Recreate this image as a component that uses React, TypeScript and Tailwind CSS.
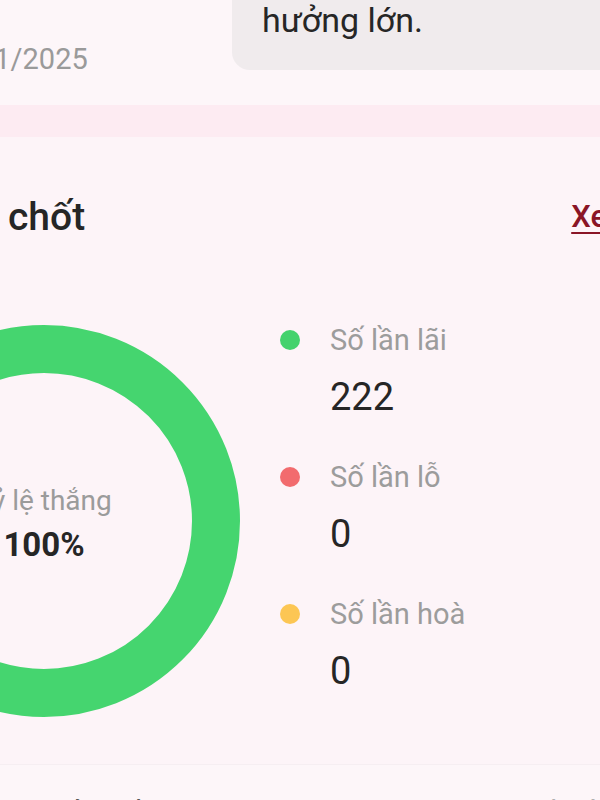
import React from "react";

const legend = [
  { color: "#44d26d", label: "Số lần lãi", value: "222" },
  { color: "#f26b6e", label: "Số lần lỗ", value: "0" },
  { color: "#fcc654", label: "Số lần hoà", value: "0" },
];

export default function App() {
  return (
    <div
      className="h-[800px] w-[600px] overflow-hidden bg-[#fdf6f9] text-[#222222]"
      style={{ fontFamily: "Roboto, 'Noto Sans', sans-serif" }}
    >
      {/* top message area */}
      <div className="flex h-[105px] items-start">
        <div className="-ml-[22px] w-[254px] shrink-0 pt-[39px] text-[29px] leading-[40px] text-[#9a9a9a]">
          01/2025
        </div>
        <div className="-mt-[40px] h-[110px] flex-1 rounded-bl-[18px] bg-[#f0ebed] pl-[30px] pt-[40px] text-[34px] leading-[40px] text-[#262626]">
          hưởng lớn.
        </div>
      </div>
      {/* pink band */}
      <div className="h-[32px] bg-[#fdebf2]" />
      {/* card */}
      <div className="h-[628px] border-b border-[#f6eef2] bg-[#fdf4f8]">
        <div className="flex items-center justify-between pl-[8px] pt-[56px]">
          <span className="text-[39px] font-medium leading-[48px] text-[#262626]">chốt</span>
          <span className="-mr-[34px] text-[31px] font-medium leading-[48px] text-[#8a1526] underline decoration-[2px] underline-offset-[5px]">
            Xem
          </span>
        </div>
        <div className="mt-[84px] flex items-start">
          <div className="relative -ml-[152px] h-[392px] w-[392px] shrink-0">
            <svg width="392" height="392" viewBox="0 0 392 392">
              <circle cx="196" cy="196" r="172" fill="none" stroke="#45d56f" strokeWidth="48" />
            </svg>
            <div className="absolute inset-0 flex flex-col items-center justify-center pt-[4px]">
              <span className="text-[28px] leading-[36px] text-[#9b9b9b]">Tỷ lệ thắng</span>
              <span className="mt-[8px] text-[33px] font-bold leading-[36px] text-[#262626]">100%</span>
            </div>
          </div>
          <div className="ml-[40px] flex flex-col">
            {legend.map((item) => (
              <div key={item.label} className="h-[137px]">
                <div className="flex items-center">
                  <span
                    className="inline-block h-[20px] w-[20px] rounded-full"
                    style={{ backgroundColor: item.color }}
                  />
                  <span className="ml-[30px] text-[29px] leading-[30px] text-[#9c9c9c]">{item.label}</span>
                </div>
                <div className="ml-[50px] mt-[19px] text-[38px] leading-[46px] text-[#262626]">{item.value}</div>
              </div>
            ))}
          </div>
        </div>
      </div>
      {/* next section */}
      <div className="flex justify-between pt-[28px] text-[28px] leading-[40px]">
        <span className="-ml-[4px] text-[#555555]">Lịch sử chốt lời</span>
        <span className="text-[#b0b0b0]">Xem tất cả</span>
      </div>
    </div>
  );
}
